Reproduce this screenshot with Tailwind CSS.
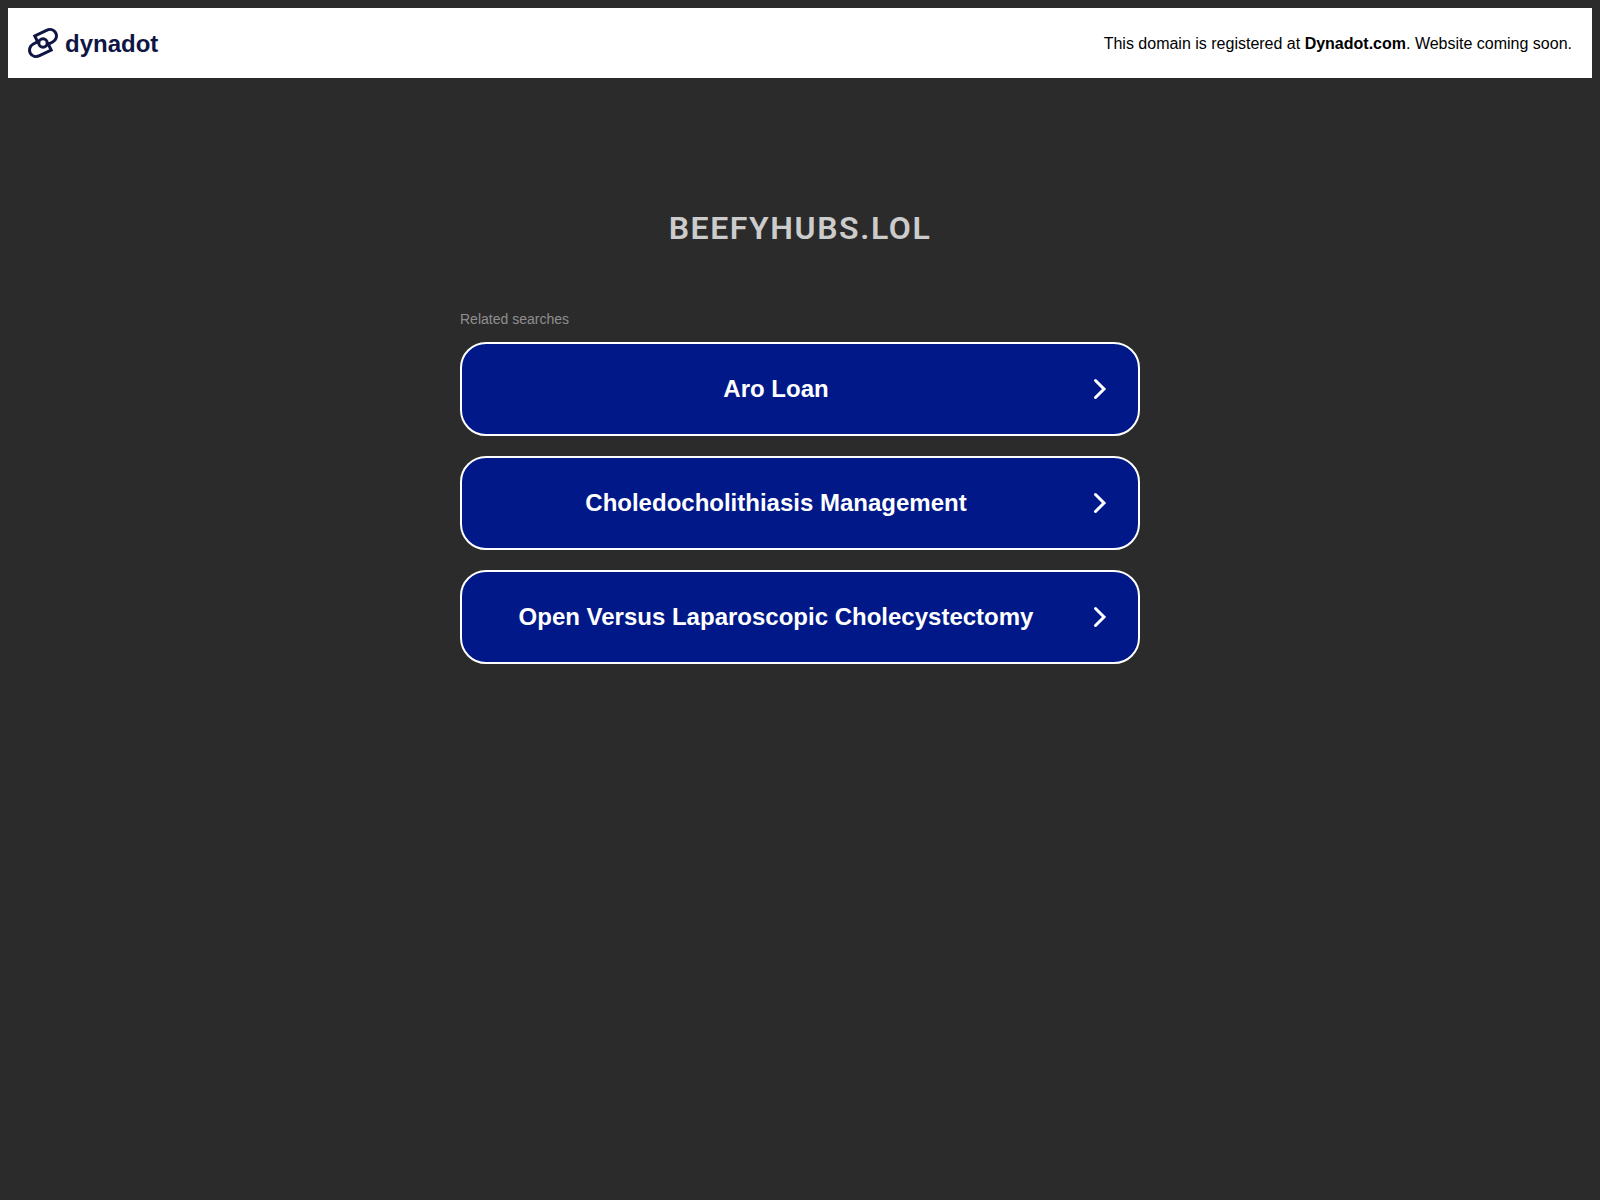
<!DOCTYPE html>
<html lang="en">
<head>
    <meta charset="UTF-8">
    <meta name="viewport" content="width=device-width, initial-scale=1.0">
    <title>beefyhubs.lol</title>
    <script src="https://cdn.jsdelivr.net/npm/@tailwindcss/browser@4"></script>
</head>
<body class="bg-[#2b2b2b] min-h-screen p-2 font-['Liberation_Sans',Arial,sans-serif]">

    <header class="flex items-center justify-between bg-white px-5 pt-5 pb-[18px]">
        <a href="#" class="flex items-start gap-[7px] text-[#0f1544]" aria-label="dynadot">
            <svg class="size-[30px]" viewBox="0 0 30 30" fill="none" stroke="currentColor" stroke-width="3">
                <path d="M10.5 15.500 6.800 8 18.500 2.300C22 .7 26 1.600 27.700 4.800c1.700 3.400.4 7.400-3 9.200l-6.200 3.200"/>
                <path d="M19.500 14.500 23.200 22 11.500 27.700C8 29.300 4 28.400 2.300 25.200c-1.700-3.400-.4-7.400 3-9.200l6.200-3.200"/>
                <circle cx="15" cy="15" r="4.200"/>
            </svg>
            <span class="text-2xl leading-8 font-bold">dynadot</span>
        </a>
        <p class="text-base text-black">This domain is registered at <a href="#" class="font-bold">Dynadot.com</a>. Website coming soon.</p>
    </header>

    <main class="mx-auto mt-[126px] w-full max-w-[680px]">
        <h1 class="text-center font-[Roboto,sans-serif] text-[32px] leading-12 font-semibold tracking-wider text-[#cccccc] uppercase">beefyhubs.lol</h1>

        <section class="mt-[55px]">
            <h2 class="text-sm leading-6 mb-[11px] text-[#8f8f8f]">Related searches</h2>
            <nav class="flex flex-col gap-5">
                <a href="#" class="flex min-h-[94px] items-center rounded-[26px] border-2 border-white bg-[#001888] pr-6 pl-2 text-2xl font-bold text-white hover:bg-[#0022b8]">
                    <span class="flex-1 text-center">Aro Loan</span>
                    <svg class="size-8" viewBox="0 0 32 32" fill="none" stroke="currentColor" stroke-width="3" stroke-linecap="round"><path d="m13.500 7.500 8.500 8.500-8.500 8.500"/></svg>
                </a>
                <a href="#" class="flex min-h-[94px] items-center rounded-[26px] border-2 border-white bg-[#001888] pr-6 pl-2 text-2xl font-bold text-white hover:bg-[#0022b8]">
                    <span class="flex-1 text-center">Choledocholithiasis Management</span>
                    <svg class="size-8" viewBox="0 0 32 32" fill="none" stroke="currentColor" stroke-width="3" stroke-linecap="round"><path d="m13.500 7.500 8.500 8.500-8.500 8.500"/></svg>
                </a>
                <a href="#" class="flex min-h-[94px] items-center rounded-[26px] border-2 border-white bg-[#001888] pr-6 pl-2 text-2xl font-bold text-white hover:bg-[#0022b8]">
                    <span class="flex-1 text-center">Open Versus Laparoscopic Cholecystectomy</span>
                    <svg class="size-8" viewBox="0 0 32 32" fill="none" stroke="currentColor" stroke-width="3" stroke-linecap="round"><path d="m13.500 7.500 8.500 8.500-8.500 8.500"/></svg>
                </a>
            </nav>
        </section>
    </main>

</body>
</html>
